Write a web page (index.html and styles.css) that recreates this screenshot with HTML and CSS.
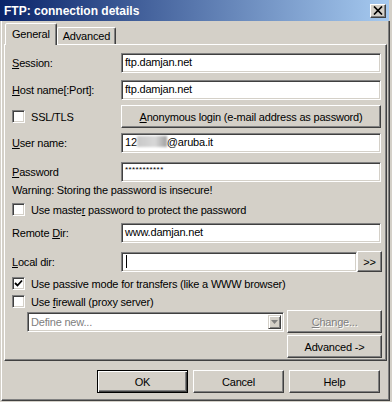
FILE: index.html
```html
<!DOCTYPE html>
<html>
<head>
    <title>FTP: connection details</title>
    <meta charset="UTF-8">
    <link rel="stylesheet" href="styles.css">
</head>
<body>
    <div class="window">
        <div class="titlebar">
            <span class="title">FTP: connection details</span>
            <span class="close-btn">
                <svg width="10" height="9" viewBox="0 0 10 9"><path d="M1 0.5 L9 8.5 M9 0.5 L1 8.5" stroke="#000" stroke-width="1.7" fill="none"/></svg>
            </span>
        </div>

        <div class="client">
            <div class="tabs">
                <div class="tab active">General</div>
                <div class="tab">Advanced</div>
            </div>

            <div class="panel">
                <div class="row row-session">
                    <span class="lbl"><u>S</u>ession:</span>
                    <div class="field">ftp.damjan.net</div>
                </div>
                <div class="row row-host">
                    <span class="lbl"><u>H</u>ost name[:Port]:</span>
                    <div class="field">ftp.damjan.net</div>
                </div>
                <div class="row row-ssl">
                    <span class="lbl check-lbl"><span class="checkbox"></span><span>SSL/TLS</span></span>
                    <button class="btn wide-btn"><u>A</u>nonymous login (e-mail address as password)</button>
                </div>
                <div class="row row-user">
                    <span class="lbl"><u>U</u>ser name:</span>
                    <div class="field">12<span class="blur"></span>@aruba.it</div>
                </div>
                <div class="row row-pass">
                    <span class="lbl"><u>P</u>assword</span>
                    <div class="field pass-field">***********</div>
                </div>
                <div class="row row-warn">
                    <span>Warning: Storing the password is insecure!</span>
                </div>
                <div class="row row-master">
                    <span class="check-lbl"><span class="checkbox"></span><span>Use maste<u>r</u> password to protect the password</span></span>
                </div>
                <div class="row row-remote">
                    <span class="lbl">Remote <u>D</u>ir:</span>
                    <div class="field">www.damjan.net</div>
                </div>
                <div class="row row-local">
                    <span class="lbl"><u>L</u>ocal dir:</span>
                    <div class="field local-field"><span class="caret"></span></div>
                    <button class="btn browse-btn">&gt;&gt;</button>
                </div>
                <div class="row row-passive">
                    <span class="check-lbl">
                        <span class="checkbox">
                            <svg width="9" height="9" viewBox="0 0 9 9"><path d="M1 4 L3.5 6.5 L8 1.5" stroke="#000" stroke-width="1.8" fill="none"/></svg>
                        </span><span>Use passive mode for transfers (like a WWW browser)</span>
                    </span>
                </div>
                <div class="row row-firewall">
                    <span class="check-lbl"><span class="checkbox"></span><span>Use <u>f</u>irewall (proxy server)</span></span>
                </div>
                <div class="row row-proxy">
                    <div class="combo">
                        <span class="combo-text">Define new...</span>
                        <span class="combo-drop">
                            <svg width="7" height="4" viewBox="0 0 7 4"><path d="M0 0 H7 L3.5 4 Z" fill="#808080"/></svg>
                        </span>
                    </div>
                    <button class="btn side-btn disabled"><u>C</u>hange...</button>
                </div>
                <div class="row row-advanced">
                    <button class="btn side-btn">Advanced -&gt;</button>
                </div>
            </div>

            <div class="button-group">
                <button class="btn dlg-btn default">OK</button>
                <button class="btn dlg-btn">Cancel</button>
                <button class="btn dlg-btn">Help</button>
            </div>
        </div>
    </div>
</body>
</html>
```

FILE: styles.css
```css
body {
    margin: 0;
    background-color: #d4d0c8;
    font-family: Tahoma, 'Liberation Sans', Arial, sans-serif;
    font-size: 11px;
    letter-spacing: -0.2px;
    color: #000;
}

.window {
    width: 392px;
    height: 402px;
    background-color: #d4d0c8;
}

.titlebar {
    width: 389px;
    height: 21px;
    box-sizing: border-box;
    padding: 0 3px 0 4px;
    display: flex;
    align-items: center;
    justify-content: space-between;
    background: linear-gradient(to right, #0a246a, #a6caf0);
}

.title {
    color: #fff;
    font-weight: bold;
    font-size: 12px;
    letter-spacing: 0;
}

.close-btn {
    width: 16px;
    height: 14px;
    box-sizing: border-box;
    display: flex;
    align-items: center;
    justify-content: center;
    background-color: #d4d0c8;
    border: 1px solid;
    border-color: #fff #404040 #404040 #fff;
    box-shadow: inset -1px -1px #808080;
}

.client {
    margin-left: 1px;
    width: 389px;
    height: 380px;
    box-sizing: border-box;
    border-left: 1px solid #fff;
    border-right: 1px solid #404040;
    border-bottom: 1px solid #404040;
    box-shadow: inset -1px -1px #808080;
}

/* tabs */
.tabs {
    height: 23px;
    margin-left: 2px;
    padding-left: 1px;
    display: flex;
    align-items: flex-end;
}

.tab {
    height: 17px;
    line-height: 17px;
    padding: 0 5px;
    box-sizing: border-box;
    border: 1px solid;
    border-bottom: none;
    border-color: #fff #404040 transparent #fff;
    border-radius: 2px 2px 0 0;
    box-shadow: inset -1px 0 #808080;
}

.tab.active {
    height: 22px;
    line-height: 20px;
    padding: 0 6px;
    margin-bottom: -1px;
    position: relative;
    z-index: 1;
    background-color: #d4d0c8;
}

.panel {
    margin-left: 2px;
    width: 383px;
    height: 317px;
    box-sizing: border-box;
    padding: 8px 5px 0 7px;
    border: 1px solid;
    border-color: #fff #404040 #404040 #fff;
    box-shadow: inset -1px -1px #808080;
}

/* rows */
.row {
    display: flex;
    align-items: center;
}

.row-session { height: 20px; }
.row-host { height: 20px; margin-top: 7px; }
.row-ssl { height: 23px; margin-top: 5px; }
.row-user { height: 20px; margin-top: 5px; }
.row-pass { height: 20px; margin-top: 9px; }
.row-warn { height: 16px; }
.row-master { height: 17px; margin-top: 3px; }
.row-remote { height: 20px; margin-top: 5px; }
.row-local { height: 21px; margin-top: 8px; }
.row-passive { height: 17px; margin-top: 3px; }
.row-firewall { height: 17px; margin-top: 1px; }
.row-proxy { height: 23px; }
.row-advanced { height: 23px; margin-top: 2px; justify-content: flex-end; }

.lbl {
    width: 109px;
    flex-shrink: 0;
}

.check-lbl {
    display: flex;
    align-items: center;
}

.checkbox {
    width: 13px;
    height: 13px;
    box-sizing: border-box;
    margin-right: 6px;
    display: flex;
    align-items: center;
    justify-content: center;
    background-color: #fff;
    border: 1px solid;
    border-color: #808080 #fff #fff #808080;
    box-shadow: inset 1px 1px #404040, inset -1px -1px #d4d0c8;
}

.field {
    flex: 1;
    height: 20px;
    line-height: 16px;
    box-sizing: border-box;
    padding-left: 3px;
    background-color: #fff;
    border: 1px solid;
    border-color: #808080 #fff #fff #808080;
    box-shadow: inset 1px 1px #404040, inset -1px -1px #d4d0c8;
    white-space: nowrap;
    overflow: hidden;
}

.pass-field {
    font-size: 8px;
    line-height: 9px;
    padding-top: 2px;
    letter-spacing: 0.4px;
}

.blur {
    display: inline-block;
    width: 30px;
    height: 11px;
    vertical-align: -1px;
    background: linear-gradient(to right, #c8c8c8, #d8d8d8 60%, #a0a0a0);
    filter: blur(1.2px);
}

.local-field {
    display: flex;
    align-items: center;
    padding-left: 4px;
}

.caret {
    width: 1px;
    height: 13px;
    background-color: #000;
}

/* buttons */
.btn {
    height: 23px;
    box-sizing: border-box;
    padding: 0;
    font-family: inherit;
    font-size: 11px;
    letter-spacing: -0.2px;
    color: #000;
    background-color: #d4d0c8;
    border: 1px solid;
    border-color: #fff #404040 #404040 #fff;
    box-shadow: inset -1px -1px #808080;
}

.wide-btn {
    flex: 1;
}

.browse-btn {
    width: 25px;
    height: 21px;
    margin-right: -1px;
}

.combo {
    width: 258px;
    height: 20px;
    margin-left: 15px;
    box-sizing: border-box;
    display: flex;
    align-items: center;
    justify-content: space-between;
    padding: 2px;
    background-color: #fff;
    border: 1px solid;
    border-color: #808080 #fff #fff #808080;
    box-shadow: inset 1px 1px #404040, inset -1px -1px #d4d0c8;
}

.combo-text {
    color: #808080;
    padding-left: 1px;
}

.combo-drop {
    width: 13px;
    height: 14px;
    box-sizing: border-box;
    display: flex;
    align-items: center;
    justify-content: center;
    background-color: #d4d0c8;
    border: 1px solid;
    border-color: #d4d0c8 #404040 #404040 #d4d0c8;
    box-shadow: inset 1px 1px #fff, inset -1px -1px #808080;
}

.side-btn {
    width: 95px;
    margin-left: 3px;
    margin-right: -1px;
}

.disabled {
    color: #808080;
    text-shadow: 1px 1px #fff;
}

.button-group {
    margin-top: 9px;
    padding-right: 9px;
    display: flex;
    justify-content: flex-end;
    gap: 5px;
}

.dlg-btn {
    width: 91px;
}

.default {
    border: 1px solid #000;
    box-shadow: inset 1px 1px #fff, inset -1px -1px #404040, inset -2px -2px #808080;
}
```
